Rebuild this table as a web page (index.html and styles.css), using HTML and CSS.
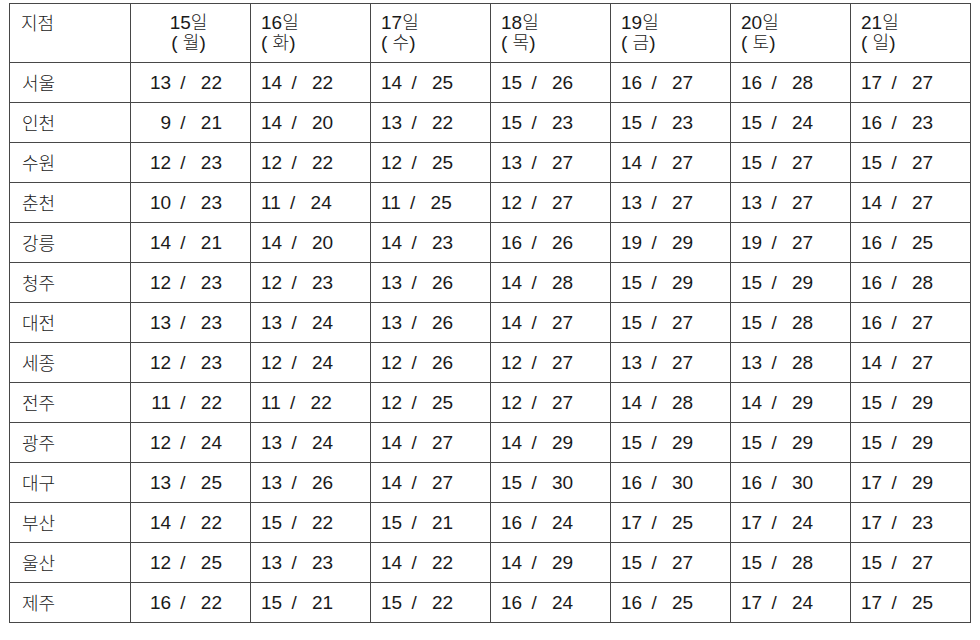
FILE: index.html
```html
<!DOCTYPE html>
<html lang="ko">
<head>
<meta charset="utf-8">
<title>지점별 기온</title>
<link rel="stylesheet" href="styles.css">
</head>
<body>
<div class="sheet">
  <div class="grid">
    <div class="hd first"><span class="ko">지점</span></div>
    <div class="hd c1"><div>15<span class="ko">일</span></div><div>( <span class="ko">월</span>)</div></div>
    <div class="hd"><div>16<span class="ko">일</span></div><div>( <span class="ko">화</span>)</div></div>
    <div class="hd"><div>17<span class="ko">일</span></div><div>( <span class="ko">수</span>)</div></div>
    <div class="hd"><div>18<span class="ko">일</span></div><div>( <span class="ko">목</span>)</div></div>
    <div class="hd"><div>19<span class="ko">일</span></div><div>( <span class="ko">금</span>)</div></div>
    <div class="hd"><div>20<span class="ko">일</span></div><div>( <span class="ko">토</span>)</div></div>
    <div class="hd"><div>21<span class="ko">일</span></div><div>( <span class="ko">일</span>)</div></div>

    <div class="name ko">서울</div>
    <div class="val c1">13 <span class="sl">/</span> 22</div>
    <div class="val">14 <span class="sl">/</span> 22</div>
    <div class="val">14 <span class="sl">/</span> 25</div>
    <div class="val">15 <span class="sl">/</span> 26</div>
    <div class="val">16 <span class="sl">/</span> 27</div>
    <div class="val">16 <span class="sl">/</span> 28</div>
    <div class="val">17 <span class="sl">/</span> 27</div>

    <div class="name ko">인천</div>
    <div class="val c1">9 <span class="sl">/</span> 21</div>
    <div class="val">14 <span class="sl">/</span> 20</div>
    <div class="val">13 <span class="sl">/</span> 22</div>
    <div class="val">15 <span class="sl">/</span> 23</div>
    <div class="val">15 <span class="sl">/</span> 23</div>
    <div class="val">15 <span class="sl">/</span> 24</div>
    <div class="val">16 <span class="sl">/</span> 23</div>

    <div class="name ko">수원</div>
    <div class="val c1">12 <span class="sl">/</span> 23</div>
    <div class="val">12 <span class="sl">/</span> 22</div>
    <div class="val">12 <span class="sl">/</span> 25</div>
    <div class="val">13 <span class="sl">/</span> 27</div>
    <div class="val">14 <span class="sl">/</span> 27</div>
    <div class="val">15 <span class="sl">/</span> 27</div>
    <div class="val">15 <span class="sl">/</span> 27</div>

    <div class="name ko">춘천</div>
    <div class="val c1">10 <span class="sl">/</span> 23</div>
    <div class="val">11 <span class="sl">/</span> 24</div>
    <div class="val">11 <span class="sl">/</span> 25</div>
    <div class="val">12 <span class="sl">/</span> 27</div>
    <div class="val">13 <span class="sl">/</span> 27</div>
    <div class="val">13 <span class="sl">/</span> 27</div>
    <div class="val">14 <span class="sl">/</span> 27</div>

    <div class="name ko">강릉</div>
    <div class="val c1">14 <span class="sl">/</span> 21</div>
    <div class="val">14 <span class="sl">/</span> 20</div>
    <div class="val">14 <span class="sl">/</span> 23</div>
    <div class="val">16 <span class="sl">/</span> 26</div>
    <div class="val">19 <span class="sl">/</span> 29</div>
    <div class="val">19 <span class="sl">/</span> 27</div>
    <div class="val">16 <span class="sl">/</span> 25</div>

    <div class="name ko">청주</div>
    <div class="val c1">12 <span class="sl">/</span> 23</div>
    <div class="val">12 <span class="sl">/</span> 23</div>
    <div class="val">13 <span class="sl">/</span> 26</div>
    <div class="val">14 <span class="sl">/</span> 28</div>
    <div class="val">15 <span class="sl">/</span> 29</div>
    <div class="val">15 <span class="sl">/</span> 29</div>
    <div class="val">16 <span class="sl">/</span> 28</div>

    <div class="name ko">대전</div>
    <div class="val c1">13 <span class="sl">/</span> 23</div>
    <div class="val">13 <span class="sl">/</span> 24</div>
    <div class="val">13 <span class="sl">/</span> 26</div>
    <div class="val">14 <span class="sl">/</span> 27</div>
    <div class="val">15 <span class="sl">/</span> 27</div>
    <div class="val">15 <span class="sl">/</span> 28</div>
    <div class="val">16 <span class="sl">/</span> 27</div>

    <div class="name ko">세종</div>
    <div class="val c1">12 <span class="sl">/</span> 23</div>
    <div class="val">12 <span class="sl">/</span> 24</div>
    <div class="val">12 <span class="sl">/</span> 26</div>
    <div class="val">12 <span class="sl">/</span> 27</div>
    <div class="val">13 <span class="sl">/</span> 27</div>
    <div class="val">13 <span class="sl">/</span> 28</div>
    <div class="val">14 <span class="sl">/</span> 27</div>

    <div class="name ko">전주</div>
    <div class="val c1">11 <span class="sl">/</span> 22</div>
    <div class="val">11 <span class="sl">/</span> 22</div>
    <div class="val">12 <span class="sl">/</span> 25</div>
    <div class="val">12 <span class="sl">/</span> 27</div>
    <div class="val">14 <span class="sl">/</span> 28</div>
    <div class="val">14 <span class="sl">/</span> 29</div>
    <div class="val">15 <span class="sl">/</span> 29</div>

    <div class="name ko">광주</div>
    <div class="val c1">12 <span class="sl">/</span> 24</div>
    <div class="val">13 <span class="sl">/</span> 24</div>
    <div class="val">14 <span class="sl">/</span> 27</div>
    <div class="val">14 <span class="sl">/</span> 29</div>
    <div class="val">15 <span class="sl">/</span> 29</div>
    <div class="val">15 <span class="sl">/</span> 29</div>
    <div class="val">15 <span class="sl">/</span> 29</div>

    <div class="name ko">대구</div>
    <div class="val c1">13 <span class="sl">/</span> 25</div>
    <div class="val">13 <span class="sl">/</span> 26</div>
    <div class="val">14 <span class="sl">/</span> 27</div>
    <div class="val">15 <span class="sl">/</span> 30</div>
    <div class="val">16 <span class="sl">/</span> 30</div>
    <div class="val">16 <span class="sl">/</span> 30</div>
    <div class="val">17 <span class="sl">/</span> 29</div>

    <div class="name ko">부산</div>
    <div class="val c1">14 <span class="sl">/</span> 22</div>
    <div class="val">15 <span class="sl">/</span> 22</div>
    <div class="val">15 <span class="sl">/</span> 21</div>
    <div class="val">16 <span class="sl">/</span> 24</div>
    <div class="val">17 <span class="sl">/</span> 25</div>
    <div class="val">17 <span class="sl">/</span> 24</div>
    <div class="val">17 <span class="sl">/</span> 23</div>

    <div class="name ko">울산</div>
    <div class="val c1">12 <span class="sl">/</span> 25</div>
    <div class="val">13 <span class="sl">/</span> 23</div>
    <div class="val">14 <span class="sl">/</span> 22</div>
    <div class="val">14 <span class="sl">/</span> 29</div>
    <div class="val">15 <span class="sl">/</span> 27</div>
    <div class="val">15 <span class="sl">/</span> 28</div>
    <div class="val">15 <span class="sl">/</span> 27</div>

    <div class="name ko">제주</div>
    <div class="val c1">16 <span class="sl">/</span> 22</div>
    <div class="val">15 <span class="sl">/</span> 21</div>
    <div class="val">15 <span class="sl">/</span> 22</div>
    <div class="val">16 <span class="sl">/</span> 24</div>
    <div class="val">16 <span class="sl">/</span> 25</div>
    <div class="val">17 <span class="sl">/</span> 24</div>
    <div class="val">17 <span class="sl">/</span> 25</div>
  </div>
</div>
</body>
</html>
```
FILE: styles.css
```css
* { box-sizing: border-box; }
body {
  margin: 0;
  background: #ffffff;
  color: #1a1a1a;
  font-family: "Liberation Sans", "Noto Sans CJK KR", sans-serif;
  font-size: 19px;
}
.sheet {
  padding: 3px 0 0 9px;
}
.grid {
  display: grid;
  grid-template-columns: 120px repeat(7, 119px);
  grid-template-rows: 58px repeat(14, 39px);
  gap: 1px;
  padding: 1px;
  background: #474747;
  width: max-content;
}
.grid > div {
  background: #ffffff;
}
.ko {
  font-family: "Noto Sans CJK KR", "Liberation Sans", sans-serif;
  font-size: 18px;
  font-weight: 300;
}
.hd {
  padding: 8px 0 0 10px;
  line-height: 18px;
}
.hd.first {
  padding-top: 9px;
  padding-left: 11px;
}
.hd.c1 {
  padding-left: 0;
  padding-right: 4px;
  text-align: center;
}
.name {
  display: flex;
  align-items: center;
  padding-left: 12px;
  padding-bottom: 2px;
}
.val {
  display: flex;
  align-items: center;
  padding-left: 10px;
  white-space: pre;
}
.val.c1 {
  justify-content: flex-end;
  padding-left: 0;
  padding-right: 28px;
}
.sl {
  margin: 0 10px 0 4px;
}
```
